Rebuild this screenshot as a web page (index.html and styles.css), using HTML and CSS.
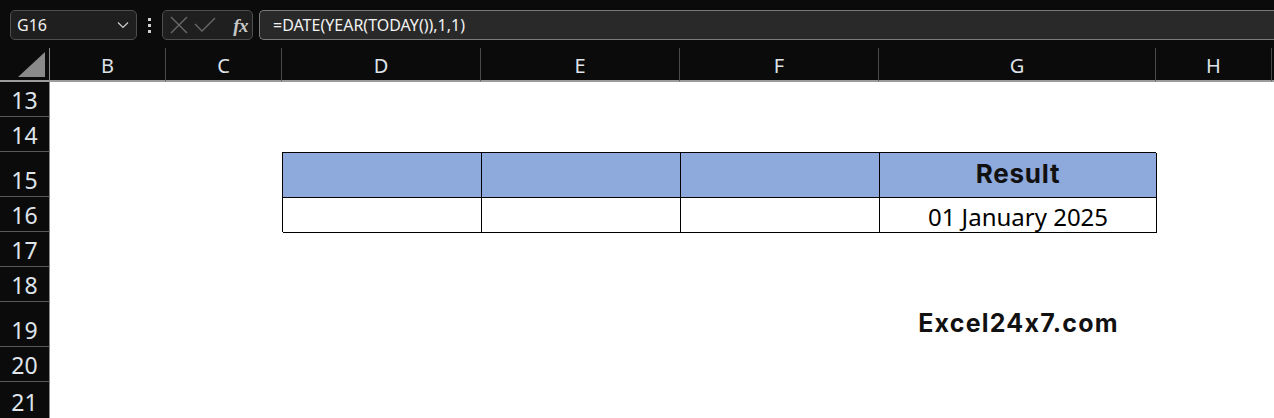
FILE: index.html
```html
<!DOCTYPE html>
<html>
<head>
<meta charset="utf-8">
<link rel="stylesheet" href="styles.css">
</head>
<body>
<div class="topbar">
  <div class="namebox">
    <span class="ref">G16</span>
    <svg class="chev" width="12" height="8" viewBox="0 0 12 8"><path d="M1 1.5 L6 6.5 L11 1.5" fill="none" stroke="#cfcfcf" stroke-width="1.2"/></svg>
  </div>
  <div class="dots"><i></i><i></i><i></i></div>
  <div class="fxbox">
    <svg width="20" height="20" viewBox="0 0 20 20"><path d="M2 2 L18 18 M18 2 L2 18" stroke="#6b6b6b" stroke-width="1.3" fill="none"/></svg>
    <svg width="22" height="18" viewBox="0 0 22 18"><path d="M1 8 L8 15 L21 2" stroke="#6b6b6b" stroke-width="1.3" fill="none"/></svg>
    <span class="fx">fx</span>
  </div>
  <div class="formula">=DATE(YEAR(TODAY()),1,1)</div>
</div>
<div class="sheet">
  <div class="corner"><svg width="28" height="26" viewBox="0 0 28 26"><polygon points="0,25 27,0 27,25" fill="#8a8a8a"/></svg></div>
  <div class="ch">B</div>
  <div class="ch">C</div>
  <div class="ch">D</div>
  <div class="ch">E</div>
  <div class="ch">F</div>
  <div class="ch">G</div>
  <div class="ch">H</div>
  <div class="ch last"></div>

  <div class="rh r13">13</div>
  <div class="rh r14">14</div>
  <div class="rh r15">15</div>
  <div class="rh r16">16</div>
  <div class="rh r17">17</div>
  <div class="rh r18">18</div>
  <div class="rh r19">19</div>
  <div class="rh r20">20</div>
  <div class="rh r21">21</div>

  <div class="cells"></div>

  <div class="tbl">
    <div class="tc hd"></div>
    <div class="tc hd"></div>
    <div class="tc hd"></div>
    <div class="tc hd res">Result</div>
    <div class="tc"></div>
    <div class="tc"></div>
    <div class="tc"></div>
    <div class="tc val">01 January 2025</div>
  </div>

  <div class="logo">Excel24x7.com</div>
</div>
</body>
</html>
```

FILE: styles.css
```css
* { box-sizing: border-box; }
html, body { margin: 0; padding: 0; background: #0b0b0b; overflow: hidden; }
body { width: 1274px; height: 418px; font-family: "Noto Sans", "Open Sans", sans-serif; }

.topbar {
  height: 48px;
  display: flex;
  align-items: flex-start;
  padding: 10px 0 0 10px;
  background: #0b0b0b;
}
.namebox {
  width: 127px;
  height: 30px;
  border: 1px solid #4e4e4e;
  border-radius: 5px;
  background: #1f1f1f;
  display: flex;
  align-items: center;
  justify-content: space-between;
  padding: 0 7px 0 6px;
  color: #f0f0f0;
  font-size: 16px;
}
.dots {
  width: 25px;
  height: 30px;
  display: flex;
  flex-direction: column;
  align-items: center;
  justify-content: center;
  gap: 3px;
}
.dots i { display: block; width: 3px; height: 3px; background: #cfcfcf; }
.fxbox {
  width: 91px;
  height: 30px;
  border: 1px solid #4e4e4e;
  border-radius: 5px;
  background: #1f1f1f;
  display: flex;
  align-items: center;
  padding: 0 4px 0 6px;
  gap: 5px;
}
.fx {
  margin-left: auto;
  font-family: "Liberation Serif", serif;
  font-style: italic;
  font-weight: bold;
  font-size: 19px;
  color: #c8c8c8;
  line-height: 1;
  letter-spacing: -0.5px;
}
.formula {
  margin-left: 6px;
  flex: 1;
  height: 30px;
  border: 1px solid #7a7a7a;
  border-right: none;
  border-radius: 5px 0 0 5px;
  background: #292929;
  color: #f2f2f2;
  font-size: 16px;
  line-height: 28px;
  padding-left: 13px;
}

.sheet {
  display: grid;
  grid-template-columns: 50px 116px 116px 199px 199px 199px 277px 116px 2px;
  grid-template-rows: 34px 35px 35px 45px 35px 35px 35px 45px 35px 36px;
  background: #ffffff;
}
.corner {
  background: #0b0b0b;
  border-right: 1px solid #8a8a8a;
  border-bottom: 2px solid #9c9c9c;
  display: flex;
  align-items: flex-end;
  justify-content: flex-end;
  padding: 0 3px 2px 0;
}
.ch {
  background: #0b0b0b;
  border-right: 1px solid #4a4a4a;
  border-bottom: 2px solid #9c9c9c;
  color: #dfe3ea;
  font-size: 20px;
  display: flex;
  align-items: center;
  justify-content: center;
  padding-top: 3px;
}
.ch.last { border-right: none; }
.rh {
  grid-column: 1;
  background: #0b0b0b;
  border-right: 1px solid #8a8a8a;
  border-bottom: 1px solid #5a5a5a;
  color: #dfe3ea;
  font-size: 23px;
  line-height: 1;
  display: flex;
  align-items: flex-end;
  justify-content: center;
  padding-bottom: 4px;
}
.r13 { grid-row: 2; } .r14 { grid-row: 3; } .r15 { grid-row: 4; }
.r16 { grid-row: 5; } .r17 { grid-row: 6; } .r18 { grid-row: 7; }
.r19 { grid-row: 8; } .r20 { grid-row: 9; } .r21 { grid-row: 10; border-bottom: none; }

.cells { grid-column: 2 / 10; grid-row: 2 / 11; background: #ffffff; }

.tbl {
  grid-column: 4 / 8;
  grid-row: 4 / 6;
  display: grid;
  grid-template-columns: 199px 199px 199px 277px;
  grid-template-rows: 45px 35px;
  border-left: 1px solid #000;
  border-top: 1px solid #000;
}
.tc {
  border-right: 1px solid #000;
  border-bottom: 1px solid #000;
  display: flex;
  align-items: center;
  justify-content: center;
}
.tc.hd { background: #8ea9db; }
.res {
  font-family: "Inter", "Noto Sans", sans-serif;
  font-feature-settings: "calt" 0;
  font-weight: 700;
  font-size: 26px;
  letter-spacing: 0.8px;
  color: #111;
  padding-bottom: 3px;
}
.val {
  font-family: "Noto Sans", sans-serif;
  font-size: 24px;
  color: #000;
  padding-top: 3px;
}
.logo {
  grid-column: 7;
  grid-row: 8;
  display: flex;
  align-items: center;
  justify-content: center;
  font-family: "Inter", "Noto Sans", sans-serif;
  font-feature-settings: "calt" 0;
  font-weight: 700;
  font-size: 25px;
  letter-spacing: 1.2px;
  color: #111;
  padding-left: 2px;
  padding-bottom: 4px;
}
```
